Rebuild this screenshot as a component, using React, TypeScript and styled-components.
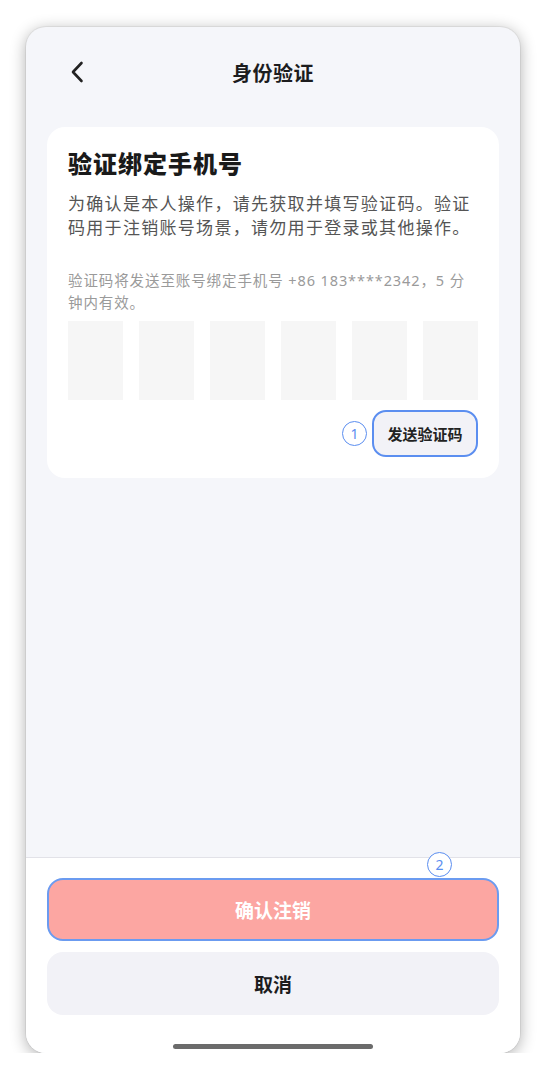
import React from 'react'
import styled, { createGlobalStyle } from 'styled-components'

const GlobalStyle = createGlobalStyle`
  body {
    margin: 0;
    background: #ffffff;
    font-family: "Noto Sans", "Noto Sans CJK SC", sans-serif;
    -webkit-font-smoothing: antialiased;
  }
`

const Page = styled.div`
  padding: 27px 0 0 26px;
`

const Phone = styled.div`
  width: 494px;
  height: 1026px;
  display: flex;
  flex-direction: column;
  border-radius: 20px;
  overflow: hidden;
  background: #f5f6fa;
  box-shadow: 0 0 0 1px rgba(0, 0, 0, 0.05), 0 3px 16px rgba(0, 0, 0, 0.32);
`

const Header = styled.header`
  height: 90px;
  display: grid;
  grid-template-columns: 1fr auto 1fr;
  align-items: center;
  padding: 0 0 0 44px;
`

const BackButton = styled.button`
  width: 16px;
  height: 24px;
  padding: 0;
  border: none;
  background: none;
  display: flex;
  align-items: center;
  cursor: pointer;
`

const Title = styled.h1`
  margin: 0;
  margin-left: -44px;
  font-size: 20px;
  font-weight: 700;
  color: #1c1c1e;
  letter-spacing: 0.5px;
`

const Main = styled.main`
  flex: 1;
  padding: 10px 21px 0;
`

const Card = styled.section`
  background: #ffffff;
  border-radius: 18px;
  padding: 20px 21px 21px;
`

const Heading = styled.h2`
  margin: 0;
  font-size: 24px;
  line-height: 33px;
  font-weight: 900;
  color: #1a1a1a;
  letter-spacing: 1px;
`

const Description = styled.p`
  margin: 12px 0 0;
  font-size: 17px;
  line-height: 24px;
  color: #555555;
  letter-spacing: 1.3px;
`

const Hint = styled.p`
  margin: 29px 0 0;
  font-size: 14.5px;
  line-height: 22px;
  color: #9a9a9a;
  letter-spacing: 0.9px;
`

const CodeBoxes = styled.div`
  margin-top: 8px;
  display: grid;
  grid-template-columns: repeat(6, 1fr);
  gap: 16px;
`

const CodeBox = styled.div`
  height: 79px;
  background: #f6f6f6;
`

const SendRow = styled.div`
  margin-top: 10px;
  display: flex;
  justify-content: flex-end;
  align-items: center;
  gap: 5px;
`

const StepBadge = styled.span`
  width: 25px;
  height: 25px;
  box-sizing: border-box;
  border: 1.5px solid #5b8ef0;
  border-radius: 50%;
  background: #ffffff;
  color: #5b8ef0;
  font-size: 14px;
  display: flex;
  align-items: center;
  justify-content: center;
`

const FloatingBadge = styled(StepBadge)`
  position: absolute;
  right: 47px;
  top: -26px;
`

const SendButton = styled.button`
  width: 106px;
  height: 47px;
  box-sizing: border-box;
  border: 2px solid #5b8ef0;
  border-radius: 14px;
  background: #f2f2f7;
  color: #222222;
  font-family: inherit;
  font-size: 15px;
  font-weight: 700;
  padding: 0;
  cursor: pointer;
`

const Footer = styled.footer`
  background: #ffffff;
  border-top: 1px solid #e2e2e8;
  padding: 20px 21px 0;
  display: flex;
  flex-direction: column;
  align-items: center;
`

const ConfirmWrap = styled.div`
  position: relative;
  width: 100%;
`

const ActionButton = styled.button<{ $variant: 'danger' | 'plain' }>`
  width: 100%;
  height: 63px;
  box-sizing: border-box;
  border-radius: 16px;
  font-family: inherit;
  font-size: 19px;
  font-weight: 700;
  cursor: pointer;
  border: ${(p) => (p.$variant === 'danger' ? '2px solid #6b9bf0' : 'none')};
  background: ${(p) => (p.$variant === 'danger' ? '#fca6a2' : '#f2f2f7')};
  color: ${(p) => (p.$variant === 'danger' ? '#ffffff' : '#1c1c1e')};
  margin-top: ${(p) => (p.$variant === 'plain' ? '11px' : '0')};
`

const HomeIndicator = styled.div`
  width: 200px;
  height: 5px;
  border-radius: 3px;
  background: #6b6b6b;
  margin: 29px 0 4px;
`

export default function App() {
  return (
    <Page>
      <GlobalStyle />
      <Phone>
        <Header>
          <BackButton aria-label="返回">
            <svg width="14" height="22" viewBox="0 0 14 22" fill="none">
              <path d="M11.5 2 L3 11 L11.5 20" stroke="#222" strokeWidth="2.6" strokeLinecap="round" strokeLinejoin="round" />
            </svg>
          </BackButton>
          <Title>身份验证</Title>
          <span />
        </Header>

        <Main>
          <Card>
            <Heading>验证绑定手机号</Heading>
            <Description>
              为确认是本人操作，请先获取并填写验证码。验证码用于注销账号场景，请勿用于登录或其他操作。
            </Description>
            <Hint>验证码将发送至账号绑定手机号 +86 183****2342，5 分钟内有效。</Hint>
            <CodeBoxes>
              {Array.from({ length: 6 }).map((_, i) => (
                <CodeBox key={i} />
              ))}
            </CodeBoxes>
            <SendRow>
              <StepBadge>1</StepBadge>
              <SendButton>发送验证码</SendButton>
            </SendRow>
          </Card>
        </Main>

        <Footer>
          <ConfirmWrap>
            <FloatingBadge>2</FloatingBadge>
            <ActionButton $variant="danger">确认注销</ActionButton>
          </ConfirmWrap>
          <ActionButton $variant="plain">取消</ActionButton>
          <HomeIndicator />
        </Footer>
      </Phone>
    </Page>
  )
}
